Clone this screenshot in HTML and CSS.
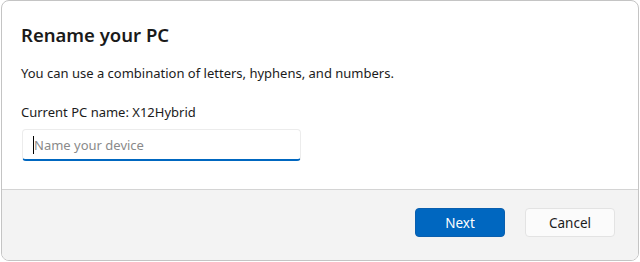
FILE: index.html
```html
<!DOCTYPE html>
<html lang="en">
<head>
<meta charset="utf-8">
<title>Rename your PC</title>
<link rel="stylesheet" href="styles.css">
</head>
<body>
<div class="dialog">
  <div class="content">
    <h1 class="title">Rename your PC</h1>
    <p class="text hint">You can use a combination of letters, hyphens, and numbers.</p>
    <p class="text current">Current PC name: X12Hybrid</p>
    <div class="input">
      <span class="caret"></span><span class="placeholder">Name your device</span>
    </div>
  </div>
  <div class="footer">
    <button class="btn primary">Next</button>
    <button class="btn secondary">Cancel</button>
  </div>
</div>
</body>
</html>
```

FILE: styles.css
```css
html, body {
  margin: 0;
  padding: 0;
  background: #ffffff;
}
body {
  width: 640px;
  height: 262px;
  overflow: hidden;
  font-family: "Noto Sans", "Open Sans", sans-serif;
  color: #1b1b1b;
}
.dialog {
  margin: 0 1px;
  height: 261px;
  box-sizing: border-box;
  border: 1px solid #c4c4c4;
  border-radius: 8px;
  background: #ffffff;
  display: flex;
  flex-direction: column;
  overflow: hidden;
}
.content {
  flex: 1;
  padding: 20px 19px 0 19px;
}
.title {
  margin: 0;
  font-size: 18.5px;
  line-height: 28px;
  font-weight: 600;
  color: #1a1a1a;
}
.text {
  margin: 0;
  font-size: 13px;
  line-height: 20px;
}
.hint {
  margin-top: 14px;
}
.current {
  margin-top: 19px;
}
.input {
  margin-top: 7px;
  margin-left: 1px;
  width: 279px;
  height: 32px;
  box-sizing: border-box;
  border: 1px solid #ececec;
  border-bottom: 2px solid #0067c0;
  border-radius: 4px;
  display: flex;
  align-items: center;
  padding-left: 10px;
  background: #ffffff;
}
.caret {
  width: 1px;
  height: 18px;
  background: #000000;
  margin-top: 1px;
}
.placeholder {
  font-size: 13px;
  color: #8a8a8a;
  margin-top: 1px;
}
.footer {
  height: 71px;
  box-sizing: border-box;
  border-top: 1px solid #d4d4d4;
  background: #f3f3f3;
  display: flex;
  justify-content: flex-end;
  align-items: flex-start;
  gap: 20px;
  padding: 18px 23px 0 0;
}
.btn {
  width: 90px;
  height: 29px;
  border-radius: 4px;
  font-family: "Noto Sans", "Open Sans", sans-serif;
  font-size: 13.5px;
  padding: 0;
}
.primary {
  background: #0067c0;
  color: #ffffff;
  border: 1px solid #0a5fae;
}
.secondary {
  background: #fbfbfb;
  color: #1b1b1b;
  border: 1px solid #e3e3e3;
}
```
